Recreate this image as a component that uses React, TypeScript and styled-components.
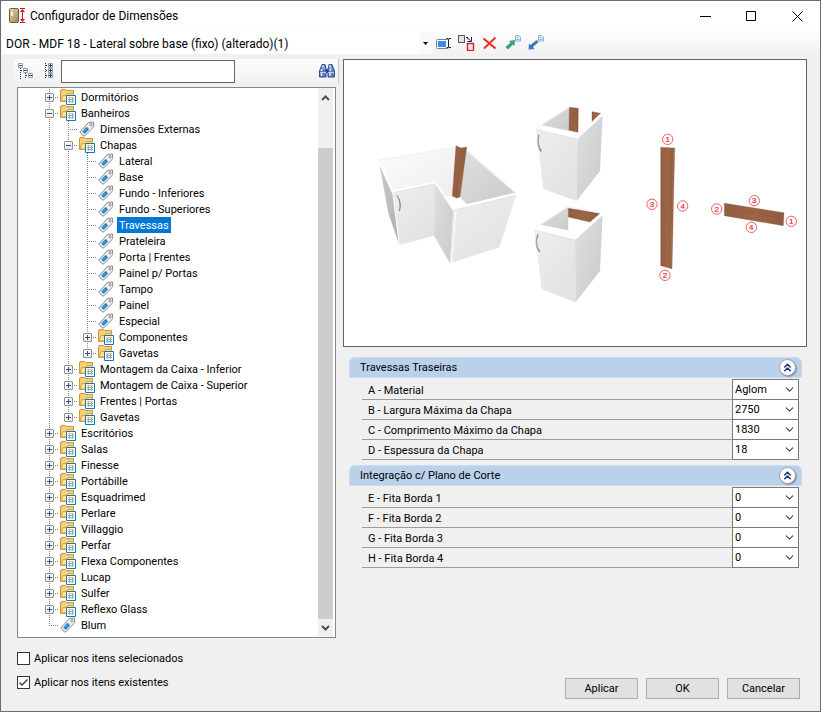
import React, { useState } from "react";
import styled, { createGlobalStyle, css } from "styled-components";
import { ChevronDown, ChevronsUp } from "lucide-react";

const GlobalStyle = createGlobalStyle`
  * { box-sizing: border-box; }
  body { margin: 0; background: #f0f0f0; }
  body, button, input, select {
    font-family: Roboto, "Liberation Sans", sans-serif;
    font-size: 11px;
    color: #000;
  }
`;

const Window = styled.main`
  display: flex;
  flex-direction: column;
  min-height: 100vh;
  border: 1px solid #6b6b6f;
  background: #f0f0f0;
`;

const TitleBar = styled.header`
  display: flex;
  align-items: center;
  height: 30px;
  padding-left: 8px;
  background: #fff;
`;

const Title = styled.h1`
  flex: 1;
  margin: 0 0 0 5px;
  font-size: 12px;
  font-weight: 400;
`;

const CaptionButton = styled.button`
  display: grid;
  place-items: center;
  width: 46px;
  height: 30px;
  padding: 0;
  border: 0;
  background: none;
`;

const MainToolbar = styled.div`
  display: flex;
  align-items: center;
  height: 24px;
  padding-left: 1px;
  background: linear-gradient(#fdfdfd, #f1f1f1);
`;

const ModelPicker = styled.div`
  display: grid;
  flex: 0 1 430px;
  min-width: 0;
  height: 22px;
  background: linear-gradient(to left, #fafafa 12px, #fff 12px);
  svg { grid-area: 1 / 1; place-self: center end; margin-right: 4px; pointer-events: none; }
`;

const ModelSelect = styled.select`
  grid-area: 1 / 1;
  appearance: none;
  min-width: 0;
  padding: 2px 16px 0 4px;
  border: 0;
  background: transparent;
  font-size: 12px;
`;

const ToolButton = styled.button`
  display: grid;
  place-items: center;
  width: 23px;
  height: 22px;
  padding: 0;
  border: 0;
  background: none;
`;

const Content = styled.div`
  display: flex;
  flex: 1;
  gap: 6px;
  padding: 4px 13px 0 16px;
`;

const Sidebar = styled.section`
  display: flex;
  flex: 0 0 320px;
  flex-direction: column;
  min-width: 0;
`;

const TreeToolbar = styled.div`
  display: flex;
  align-items: center;
  height: 24px;
  margin: 0 -2px 4px -3px;
  border-right: 1px solid #c4c4c4;
  background: linear-gradient(#fcfcfc, #f1f1f1);
`;

const SearchInput = styled.input`
  width: 174px;
  height: 23px;
  margin: 0 auto 0 1px;
  padding: 0 4px;
  border: 1px solid #646464;
  border-radius: 0;
  background: #fff;
`;

const TreeBox = styled.div`
  display: flex;
  flex: 1;
  width: 319px;
  border: 1px solid #828790;
  background: #fff;
`;

const TreeScroller = styled.div`
  flex: 1;
  min-width: 0;
  padding: 1px 0 0 22px;
  overflow: hidden;
`;

const ScrollBar = styled.div`
  display: flex;
  flex-direction: column;
  width: 17px;
  padding: 1px 2px 1px 0;
  background: linear-gradient(to left, #fff 2px, #f0f0f0 2px);
`;

const ScrollArrow = styled.button`
  display: grid;
  place-items: center;
  flex: 0 0 17px;
  width: 15px;
  padding: 0;
  border: 0;
  background: none;
`;

const ScrollTrack = styled.div`
  display: flex;
  flex: 1;
  flex-direction: column;
`;

const ScrollSpace = styled.div`
  flex: 42;
`;

const ScrollThumb = styled.div`
  flex: 470;
  background: #cdcdcd;
`;

const Branch = styled.ul`
  margin: 0;
  padding: 0;
  list-style: none;
`;

const TreeRow = styled.div`
  display: flex;
  height: 16px;
  white-space: nowrap;
  > svg { flex: none; margin: 0 1px; }
`;

const Guide = styled.span<{ $end?: boolean; $tick?: boolean }>`
  display: flex;
  justify-content: center;
  flex: none;
  width: 19px;
  padding-top: 4px;
  background-image:
    repeating-linear-gradient(to bottom, #858585 0 1px, transparent 1px 2px),
    repeating-linear-gradient(to right, #858585 0 1px, transparent 1px 2px);
  background-repeat: no-repeat;
  background-position: 9px 0, 9px 8px;
  background-size: 1px ${(p) => (p.$end ? "9px" : "16px")}, ${(p) => (p.$tick ? "10px 1px" : "0 0")};
`;

const Expander = styled.button`
  display: grid;
  place-items: center;
  width: 9px;
  height: 9px;
  padding: 0;
  border: 1px solid #919191;
  border-radius: 1px;
  background: linear-gradient(135deg, #fff, #e4e4e4);
`;

const NodeLabel = styled.button<{ $selected?: boolean }>`
  height: 16px;
  margin-left: 2px;
  padding: 1px 2px 0;
  border: 0;
  background: none;
  line-height: 16px;
  ${(p) => p.$selected && css`background: #0078d7; color: #fff;`}
`;

const Details = styled.section`
  display: flex;
  flex: 1;
  flex-direction: column;
  min-width: 0;
`;

const Preview = styled.figure`
  margin: 0 0 10px;
  border: 1px solid #646464;
  background: #fff;
  svg { display: block; width: 100%; height: auto; }
`;

const Group = styled.section`
  margin: 0 5px 5px 6px;
`;

const GroupHeader = styled.header`
  display: flex;
  align-items: center;
  justify-content: space-between;
  height: 21px;
  margin-bottom: 1px;
  padding: 0 5px 0 10px;
  border: 1px solid #cbdcf0;
  border-radius: 6px 6px 0 0;
  background: #b9d1ea;
`;

const GroupTitle = styled.h2`
  margin: 0;
  font-size: 11px;
  font-weight: 400;
`;

const CollapseButton = styled.button`
  display: grid;
  place-items: center;
  width: 17px;
  height: 17px;
  padding: 0;
  border: 1px solid #9a9fb4;
  border-radius: 50%;
  background: #fff;
  box-shadow: 1px 1px 1px #8b93a8;
  color: #1c3a78;
`;

const Fields = styled.div`
  padding: 0 3px 0 13px;
`;

const Field = styled.div`
  display: flex;
  height: 20px;
  border-bottom: 1px solid #9b9b9b;
  &:first-child { height: 21px; }
`;

const FieldLabel = styled.label`
  flex: 1;
  align-self: flex-end;
  padding-left: 6px;
  line-height: 17px;
`;

const Combo = styled.span`
  display: grid;
  flex: 0 0 67px;
  margin-bottom: -1px;
  border: 1px solid #7a7a7a;
  border-top-width: 0;
  background: #fff;
  ${Field}:first-child & { border-top-width: 1px; }
  svg { grid-area: 1 / 1; place-self: center end; margin-right: 2px; pointer-events: none; color: #444; }
`;

const ComboSelect = styled.select`
  grid-area: 1 / 1;
  appearance: none;
  min-width: 0;
  padding: 0 0 1px 2px;
  border: 0;
  border-radius: 0;
  background: transparent;
`;

const Footer = styled.footer`
  display: flex;
  align-items: flex-start;
  justify-content: space-between;
  height: 73px;
  padding: 12px 20px 0 16px;
`;

const CheckList = styled.div`
  display: flex;
  flex-direction: column;
  gap: 8px;
`;

const CheckLabel = styled.label`
  display: flex;
  align-items: center;
  gap: 4px;
  height: 16px;
`;

const CheckMark = styled.span`
  display: grid;
  width: 13px;
  height: 13px;
  border: 1px solid #333;
  background: #fff;
  input, svg { grid-area: 1 / 1; }
  svg { visibility: hidden; pointer-events: none; }
  input:checked + svg { visibility: visible; }
`;

const CheckInput = styled.input`
  appearance: none;
  width: 11px;
  height: 11px;
  margin: 0;
`;

const Actions = styled.div`
  display: flex;
  gap: 8px;
  padding-top: 28px;
`;

const ActionButton = styled.button`
  width: 73px;
  height: 21px;
  padding: 0;
  border: 1px solid #adadad;
  background: #e1e1e1;
`;

type NodeData = { label: string; kind: "folder" | "tag"; open?: boolean; children?: NodeData[] };
const folder = (label: string, children?: NodeData[]): NodeData => ({ label, kind: "folder", open: !!children, children });
const tag = (label: string): NodeData => ({ label, kind: "tag" });

const tree: NodeData[] = [
  folder("Dormitórios"),
  folder("Banheiros", [
    tag("Dimensões Externas"),
    folder("Chapas", [
      ...["Lateral", "Base", "Fundo - Inferiores", "Fundo - Superiores", "Travessas", "Prateleira",
        "Porta | Frentes", "Painel p/ Portas", "Tampo", "Painel", "Especial"].map(tag),
      folder("Componentes"),
      folder("Gavetas"),
    ]),
    folder("Montagem da Caixa - Inferior"),
    folder("Montagem de Caixa - Superior"),
    folder("Frentes | Portas"),
    folder("Gavetas"),
  ]),
  ...["Escritórios", "Salas", "Finesse", "Portábille", "Esquadrimed", "Perlare", "Villaggio", "Perfar",
    "Flexa Componentes", "Lucap", "Sulfer", "Reflexo Glass"].map((l) => folder(l)),
  tag("Blum"),
];

const FolderIcon = () => (
  <svg width="16" height="16" viewBox="0 0 16 16" aria-hidden="true">
    <path d="M.5 12.500V2Q.5.5 2 .5h3l1.500 1h7v11z" fill="#f8cf72" stroke="#cf9440" />
    <path d="M1 12 3 6.500H6.500L8 4.500h5.500V12z" fill="#ffe298" stroke="#d9a14b" />
    <path d="M6.500 6.500h9v9h-9z" fill="#fff" stroke="#1479ae" />
    <path d="M8 8.500h6" stroke="#f2c75e" />
    <path d="M9.500 9v5M12.500 9v5M8 10.500h6M8 12.500h6" stroke="#80add9" />
  </svg>
);

const TagIcon = () => (
  <svg width="16" height="16" viewBox="0 0 16 16" aria-hidden="true">
    <path d="M.8 11 9.500 1.500 14.500 1 14.800 5.500 6 14.800 4.500 15z" fill="#f1f2f3" stroke="#858a90" />
    <path d="m3.200 10.500 4.300-4.700 2.700 2.400-4.500 4.800z" fill="#2487c8" />
    <path d="m4 11.500 4.800-5" stroke="#7dc3ec" strokeDasharray="1 1" />
    <circle cx="12" cy="3.800" r="1.200" fill="#fff" stroke="#8b8f94" />
  </svg>
);

function TreeNode({ node, depth, last, selected, onSelect }: {
  node: NodeData; depth: number; last: boolean; selected: string; onSelect: (key: string) => void;
}) {
  const [open, setOpen] = useState(!!node.open);
  return (
    <li>
      <TreeRow>
        {Array.from({ length: depth }, (_, i) => <Guide key={i} />)}
        <Guide $tick $end={last}>
          {node.kind === "folder" && (
            <Expander aria-label={open ? `Recolher ${node.label}` : `Expandir ${node.label}`} onClick={() => setOpen(!open)}>
              <svg width="7" height="7" viewBox="0 0 7 7" stroke="#33508f">
                <path d={open ? "M1 3.500h5" : "M1 3.500h5M3.500 1v5"} />
              </svg>
            </Expander>
          )}
        </Guide>
        {node.kind === "folder" ? <FolderIcon /> : <TagIcon />}
        <NodeLabel $selected={selected === node.label} onClick={() => onSelect(node.label)}>{node.label}</NodeLabel>
      </TreeRow>
      {open && node.children && (
        <Branch>
          {node.children.map((c, i) => (
            <TreeNode key={c.label} node={c} depth={depth + 1} last={i === node.children!.length - 1} selected={selected} onSelect={onSelect} />
          ))}
        </Branch>
      )}
    </li>
  );
}

const AppIcon = () => (
  <svg width="16" height="16" viewBox="0 0 16 16" aria-hidden="true">
    <defs><linearGradient id="door" x2="1" y2="1"><stop stopColor="#e9d3b0" /><stop offset="1" stopColor="#a98353" /></linearGradient></defs>
    <rect x=".5" y=".5" width="9" height="14" rx="1" fill="url(#door)" stroke="#725a42" />
    <path d="M3 4v4" stroke="#fff" strokeWidth="1.500" />
    <path d="M11 .5h5M11 14.500h5M13.500 2v11" stroke="#d8122a" />
    <path d="m13.500 1 2.500 3h-5zM13.500 14l2.500-3h-5z" fill="#d8122a" />
  </svg>
);

const RenameIcon = () => (
  <svg width="16" height="16" viewBox="0 0 16 16" aria-hidden="true">
    <rect x=".5" y="4.500" width="12" height="9" rx="1" fill="#fff" stroke="#7182a0" />
    <path d="M2 6h8v6H2z" fill="#4287e8" />
    <path d="M10.500 3.500h1.500l.5.5.5-.5h2M12.500 4v8M10.500 12.500h1.500l.5-.5.5.5h2" fill="none" stroke="#222" />
  </svg>
);
const ReplaceIcon = () => (
  <svg width="17" height="16" viewBox="0 0 17 16" aria-hidden="true">
    <rect x=".5" y=".5" width="6" height="7" fill="#e3e3e6" stroke="#5e5557" />
    <path d="M8 2.500h2M9 3l3.500 2.500M13.500 2v4.500H9.500" fill="none" stroke="#111b70" />
    <rect x="9.500" y="8.500" width="6" height="7" fill="#e8e8e8" stroke="#e31b1b" strokeWidth="1.400" />
  </svg>
);
const DeleteIcon = () => (
  <svg width="15" height="14" viewBox="0 0 15 14" aria-hidden="true">
    <path d="m1.500 2.500 12 10" stroke="#ed2a25" strokeWidth="2.200" />
    <path d="M13.500 1.500 2 12.500" stroke="#ed2a25" strokeWidth="1.800" />
  </svg>
);
const Sheet = () => (
  <path d="M10.500.5h3l2 1.500v4h-5zM11.500 2.500h2M11.500 4.500h3" fill="#eaf3fc" stroke="#8db0d8" />
);
const ExportIcon = () => (
  <svg width="16" height="16" viewBox="0 0 16 16" aria-hidden="true">
    <Sheet />
    <path d="m10 5-.5 6-1.500-1.500-5 5-2.500-2.500 5-4.500L4 6z" fill="#35a47a" />
  </svg>
);
const ImportIcon = () => (
  <svg width="16" height="16" viewBox="0 0 16 16" aria-hidden="true">
    <Sheet />
    <path d="M.5 14.500 1 8.500l1.500 1.500 6-5 2 2-5.500 5 1.500 2z" fill="#3e78c3" />
  </svg>
);

const CollapseTreeIcon = () => (
  <svg width="16" height="16" viewBox="0 0 16 16" fill="none" aria-hidden="true">
    <path d="M2.500 5v11M7.500 10v6M3 7.500h3M8 12.500h3" stroke="#333" strokeDasharray="1 1" />
    <path d="M.5.5h4v4h-4zM5.500 5.500h4v4h-4zM10.500 10.500h4v4h-4z" fill="#fff" stroke="#8ca0b4" />
    <path d="M1 2.500h3M6 7.500h3M11 12.500h3" stroke="#334c65" />
  </svg>
);
const ExpandTreeIcon = () => (
  <svg width="10" height="16" viewBox="0 0 10 16" fill="none" aria-hidden="true">
    <path d="M1.500 0v16M2 2.500h3M2 7.500h3M2 12.500h3" stroke="#333" strokeDasharray="1 1" />
    <path d="M4.500.5h4v4h-4zM4.500 5.500h4v4h-4zM4.500 10.500h4v4h-4z" fill="#fff" stroke="#8ca0b4" />
    <path d="M5 2.500h3M5 7.500h3M5 12.500h3M6.500 1v3M6.500 6v3M6.500 11v3" stroke="#26384e" />
  </svg>
);
const BinocularsIcon = () => (
  <svg width="16" height="14" viewBox="0 0 16 14" aria-hidden="true">
    <path d="M3 .5h3L7 5v8H.5V7zM10 .5h3L15.500 7v6H9V5z" fill="#5b80be" stroke="#294f91" />
    <path d="M7 5h2v4H7z" fill="#294f91" />
    <path d="M4 1v2M2.500 5v2M11 1v2M11.500 5v2M2.500 9v3M11 9v3" stroke="#e7effc" strokeWidth="1.500" />
    <path d="M1 8.500h6M9 8.500h6M3 4h3M10 4h3" stroke="#bdd0ef" />
  </svg>
);

const Wood = ({ points }: { points: string }) => <polygon points={points} fill="url(#wood)" stroke="#8a5639" strokeWidth="1" />;

const Marker = ({ x, y, n }: { x: number; y: number; n: number }) => (
  <g>
    <circle cx={x} cy={y} r="15.500" fill="#fff" stroke="#ee3f45" strokeWidth="2.500" />
    <text x={x} y={y + 8} textAnchor="middle" fontFamily="Liberation Sans, sans-serif" fontSize="24" fill="#e8262d" stroke="#e8262d" strokeWidth=".6">{n}</text>
  </g>
);

const markers: [number, number, number][] = [
  [113, 58, 1], [66, 253, 3], [158, 258, 4], [105, 466, 2], [373, 242, 3], [260, 267, 2], [484, 304, 1], [364, 322, 4],
];

const PanelDrawing = () => (
  <svg viewBox="0 0 1386 858" role="img" aria-label="Travessas em gabinetes">
    <defs>
      <linearGradient id="wood" x2="1"><stop stopColor="#935b40" /><stop offset=".5" stopColor="#9d6648" /><stop offset="1" stopColor="#8f593d" /></linearGradient>
      <linearGradient id="front" x2=".7" y2="1"><stop stopColor="#eeeeef" /><stop offset="1" stopColor="#e2e2e4" /></linearGradient>
      <linearGradient id="side" x2="1" y2="1"><stop stopColor="#dfdfe0" /><stop offset="1" stopColor="#cacacc" /></linearGradient>
      <linearGradient id="dark" y2="1" x2="1"><stop stopColor="#cfcfd0" /><stop offset="1" stopColor="#acacae" /></linearGradient>
      <linearGradient id="inside" x2="1" y2="1"><stop stopColor="#fdfdfd" /><stop offset="1" stopColor="#ededee" /></linearGradient>
      <linearGradient id="handle" x2="1"><stop stopColor="#aaa" /><stop offset="1" stopColor="#808285" /></linearGradient>
    </defs>
    <g transform="translate(78 105)" strokeLinejoin="round">
      <polygon points="26,196 258,157 248,305 225,305 195,262 68,290" fill="url(#inside)" />
      <polygon points="288,165 435,293 290,328 268,305" fill="url(#side)" />
      <polygon points="225,305 268,304 290,328 250,340" fill="#fff" />
      <path d="M26 196 258 157M288 165 438 294" stroke="#f1f1f1" strokeWidth="4" fill="none" />
      <Wood points="258,152 273,159 290,156 270,306 260,309 247,303" />
      <path d="m273 159-14 148" stroke="#7d4c34" strokeWidth="1.500" />
      <polygon points="26,196 68,290 88,450 55,355" fill="url(#dark)" />
      <polygon points="68,290 195,262 192,422 88,450" fill="url(#front)" />
      <polygon points="195,262 250,343 240,505 192,422" fill="url(#side)" />
      <polygon points="250,343 440,297 388,457 240,505" fill="url(#front)" />
      <path d="m26 196 42 94 127-28 55 81 190-46" stroke="#fff" strokeWidth="7" fill="none" />
      <path d="m68 290 20 160M258 343l-13 160" stroke="#fff" strokeWidth="3" />
      <path d="m72 293 123-27 53 80M250 346l186-45" stroke="#dadadc" strokeWidth="2" fill="none" />
      <path d="m81 300q15 26 7 48" fill="none" stroke="url(#handle)" strokeWidth="4" />

      <polygon points="598,37 597,107 515,91" fill="url(#side)" />
      <Wood points="598,37 625,40 624,112 597,106" />
      <path d="m612 40-3 68" stroke="#7d4c34" strokeWidth="1.500" />
      <Wood points="666,50 692,55 666,80" />
      <path d="m598 37-100 61M692 56 622 127" fill="none" stroke="#eee" strokeWidth="3" />
      <polygon points="498,98 622,127 620,318 520,282" fill="url(#front)" />
      <polygon points="622,127 698,57 690,228 620,318" fill="url(#side)" />
      <path d="m498 98 124 29 76-70" fill="none" stroke="#fff" strokeWidth="8" />
      <path d="m498 103 123 29" fill="none" stroke="#ddd" strokeWidth="2" />
      <path d="m506 119q-6 34 8 50" fill="none" stroke="url(#handle)" strokeWidth="5" />

      <polygon points="595,335 595,406 513,389" fill="url(#side)" />
      <Wood points="595,340 690,355 660,381 595,366" />
      <path d="m595 335-103 65M595 335l98 20" fill="none" stroke="#eee" strokeWidth="3" />
      <polygon points="492,400 615,430 617,622 515,583" fill="url(#front)" />
      <polygon points="615,430 698,355 690,528 617,622" fill="url(#side)" />
      <path d="m492 400 123 30 83-75" fill="none" stroke="#fff" strokeWidth="8" />
      <path d="m492 405 123 30" fill="none" stroke="#ddd" strokeWidth="2" />
      <path d="m504 418q-12 32 5 52" fill="none" stroke="url(#handle)" strokeWidth="5" />
    </g>
    <g transform="translate(858 180)">
      <Wood points="92,82 134,84 126,446 92,437" />
      <path d="m131 85-8 360" stroke="#b08064" strokeWidth="1.500" />
      <Wood points="283,250 462,278 460,317 283,287" />
      <path d="m285 268q80 5 173 31" stroke="#8f5b40" strokeWidth="2" fill="none" />
      {markers.map(([x, y, n]) => <Marker key={`${x}-${y}`} x={x} y={y} n={n} />)}
    </g>
  </svg>
);

type FieldData = { id: string; label: string; value: string };
const groups: { title: string; fields: FieldData[] }[] = [
  {
    title: "Travessas Traseiras",
    fields: [
      { id: "A", label: "Material", value: "Aglom" },
      { id: "B", label: "Largura Máxima da Chapa", value: "2750" },
      { id: "C", label: "Comprimento Máximo da Chapa", value: "1830" },
      { id: "D", label: "Espessura da Chapa", value: "18" },
    ],
  },
  {
    title: "Integração c/ Plano de Corte",
    fields: ["E", "F", "G", "H"].map((id, i) => ({ id, label: `Fita Borda ${i + 1}`, value: "0" })),
  },
];

function PropertyGroup({ title, fields }: { title: string; fields: FieldData[] }) {
  const [open, setOpen] = useState(true);
  return (
    <Group>
      <GroupHeader>
        <GroupTitle>{title}</GroupTitle>
        <CollapseButton aria-label={`Recolher ${title}`} aria-expanded={open} onClick={() => setOpen(!open)}>
          <ChevronsUp size={13} strokeWidth={3} />
        </CollapseButton>
      </GroupHeader>
      {open && (
        <Fields>
          {fields.map((f) => (
            <Field key={f.id}>
              <FieldLabel htmlFor={`field-${f.id}`}>{f.id} - {f.label}</FieldLabel>
              <Combo>
                <ComboSelect id={`field-${f.id}`} defaultValue={f.value}><option>{f.value}</option></ComboSelect>
                <ChevronDown size={13} strokeWidth={2} />
              </Combo>
            </Field>
          ))}
        </Fields>
      )}
    </Group>
  );
}

function Check({ label, checked }: { label: string; checked?: boolean }) {
  return (
    <CheckLabel>
      <CheckMark>
        <CheckInput type="checkbox" defaultChecked={checked} />
        <svg width="11" height="11" viewBox="0 0 11 11"><path d="m1.500 5.500 2.500 2.500 5.500-5.500" fill="none" stroke="#333" strokeWidth="1.300" /></svg>
      </CheckMark>
      {label}
    </CheckLabel>
  );
}

export default function App() {
  const [selected, setSelected] = useState("Travessas");
  return (
    <Window>
      <GlobalStyle />
      <TitleBar>
        <AppIcon />
        <Title>Configurador de Dimensões</Title>
        <CaptionButton aria-label="Minimizar"><svg width="11" height="11" stroke="#000"><path d="M0 5.500h11" /></svg></CaptionButton>
        <CaptionButton aria-label="Maximizar"><svg width="11" height="11" stroke="#000" fill="none"><path d="M.5.5h9v9H.5z" /></svg></CaptionButton>
        <CaptionButton aria-label="Fechar"><svg width="11" height="11" stroke="#000"><path d="m.5.5 10 10M10.500.5l-10 10" /></svg></CaptionButton>
      </TitleBar>
      <MainToolbar>
        <ModelPicker>
          <ModelSelect aria-label="Modelo"><option>DOR - MDF 18 - Lateral sobre base (fixo) (alterado)(1)</option></ModelSelect>
          <svg width="5" height="3"><path d="M0 0h5L2.500 3z" /></svg>
        </ModelPicker>
        <ToolButton aria-label="Renomear"><RenameIcon /></ToolButton>
        <ToolButton aria-label="Substituir"><ReplaceIcon /></ToolButton>
        <ToolButton aria-label="Excluir"><DeleteIcon /></ToolButton>
        <ToolButton aria-label="Exportar"><ExportIcon /></ToolButton>
        <ToolButton aria-label="Importar"><ImportIcon /></ToolButton>
      </MainToolbar>
      <Content>
        <Sidebar>
          <TreeToolbar>
            <ToolButton aria-label="Recolher tudo"><CollapseTreeIcon /></ToolButton>
            <ToolButton aria-label="Expandir tudo"><ExpandTreeIcon /></ToolButton>
            <SearchInput type="text" aria-label="Buscar" />
            <ToolButton aria-label="Localizar"><BinocularsIcon /></ToolButton>
          </TreeToolbar>
          <TreeBox>
            <TreeScroller>
              <Branch>
                {tree.map((n, i) => (
                  <TreeNode key={n.label} node={n} depth={0} last={i === tree.length - 1} selected={selected} onSelect={setSelected} />
                ))}
              </Branch>
            </TreeScroller>
            <ScrollBar>
              <ScrollArrow aria-label="Rolar para cima"><svg width="9" height="6"><path d="m1 5 3.500-3.500L8 5" fill="none" stroke="#505050" strokeWidth="2" /></svg></ScrollArrow>
              <ScrollTrack><ScrollSpace /><ScrollThumb /></ScrollTrack>
              <ScrollArrow aria-label="Rolar para baixo"><svg width="9" height="6"><path d="m1 1 3.500 3.500L8 1" fill="none" stroke="#505050" strokeWidth="2" /></svg></ScrollArrow>
            </ScrollBar>
          </TreeBox>
        </Sidebar>
        <Details>
          <Preview><PanelDrawing /></Preview>
          {groups.map((g) => <PropertyGroup key={g.title} {...g} />)}
        </Details>
      </Content>
      <Footer>
        <CheckList>
          <Check label="Aplicar nos itens selecionados" />
          <Check label="Aplicar nos itens existentes" checked />
        </CheckList>
        <Actions>
          <ActionButton>Aplicar</ActionButton>
          <ActionButton>OK</ActionButton>
          <ActionButton>Cancelar</ActionButton>
        </Actions>
      </Footer>
    </Window>
  );
}
